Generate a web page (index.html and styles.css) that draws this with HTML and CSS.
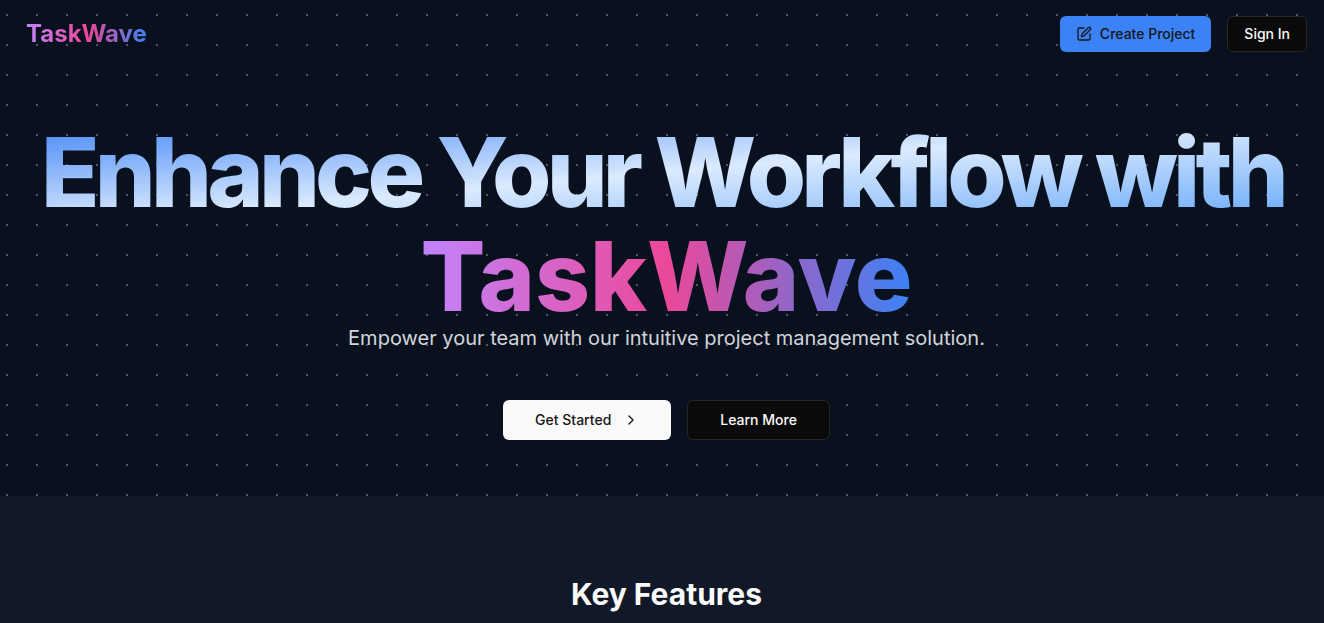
FILE: index.html
```html
<!DOCTYPE html>
<html lang="en">
<head>
<meta charset="utf-8">
<title>TaskWave</title>
<link rel="stylesheet" href="styles.css">
</head>
<body>
<div class="top">
  <header class="nav">
    <a class="logo brand" href="#">TaskWave</a>
    <nav class="nav-actions">
      <button class="btn btn-blue" type="button">
        <svg class="icon" viewBox="0 0 24 24" aria-hidden="true"><path d="M12 3H5a2 2 0 0 0-2 2v14a2 2 0 0 0 2 2h14a2 2 0 0 0 2-2v-7"/><path d="M18.375 2.625a1 1 0 0 1 3 3l-9.013 9.014a2 2 0 0 1-.853.505l-2.873.84a.5.5 0 0 1-.62-.62l.84-2.873a2 2 0 0 1 .506-.852z"/></svg>
        Create Project
      </button>
      <button class="btn btn-dark" type="button">Sign In</button>
    </nav>
  </header>
  <main class="hero">
    <h1 class="headline">
      <span class="headline-lead">Enhance Your Workflow with</span>
      <span class="brand">TaskWave</span>
    </h1>
    <p class="tagline">Empower your team with our intuitive project management solution.</p>
    <div class="hero-actions">
      <button class="btn btn-large btn-light" type="button">
        Get Started
        <svg class="icon" viewBox="0 0 24 24" aria-hidden="true"><path d="m9 18 6-6-6-6"/></svg>
      </button>
      <button class="btn btn-large btn-dark" type="button">Learn More</button>
    </div>
  </main>
</div>
<section class="features">
  <h2 class="features-title">Key Features</h2>
</section>
</body>
</html>
```
FILE: styles.css
```css
* { box-sizing: border-box; margin: 0; }

body {
  background: #111827;
  color: #fafafa;
  font-family: Inter, "Liberation Sans", sans-serif;
}

.top {
  padding: 0 1px 0 10px;
  background-color: #0a111e;
  background-image: conic-gradient(from 90deg at 28px 28px, #4d5862 90deg, transparent 0);
  background-size: 30px 30px;
  background-position: -22px -14px;
}

.nav {
  display: flex;
  justify-content: space-between;
  align-items: center;
  padding: 16px;
}

.brand {
  background: linear-gradient(to right, #c084fc, #ec4899, #3b82f6);
  background-clip: text;
  -webkit-background-clip: text;
  color: transparent;
}

.logo {
  font-size: 24px;
  line-height: 32px;
  font-weight: 700;
  text-decoration: none;
}

.nav-actions { display: flex; gap: 16px; }

.btn {
  display: flex;
  align-items: center;
  justify-content: center;
  gap: 8px;
  height: 36px;
  padding: 0 16px;
  border: 0;
  border-radius: 6px;
  font: 500 14px/20px Inter, "Liberation Sans", sans-serif;
}

.btn-blue { background: #3b82f6; color: #171717; }
.btn-dark { background: #0a0a0a; color: #fafafa; border: 1px solid #262626; }
.btn-light { background: #fafafa; color: #171717; gap: 12px; }
.btn-large { height: 40px; padding: 0 32px; }

.icon {
  width: 16px;
  height: 16px;
  fill: none;
  stroke: currentColor;
  stroke-width: 2;
  stroke-linecap: round;
  stroke-linejoin: round;
}

.hero {
  display: flex;
  flex-direction: column;
  align-items: center;
  padding: 48px 16px 56px;
  text-align: center;
}

.headline {
  display: flex;
  flex-direction: column;
  align-items: center;
  font-size: 96px;
  line-height: 96px;
  font-weight: 800;
}

.headline-lead {
  padding-right: 8px;
  line-height: 112px;
  letter-spacing: -0.05em;
  background: linear-gradient(to bottom right, #3b82f6, #dbeafe, #60a5fa);
  background-clip: text;
  -webkit-background-clip: text;
  color: transparent;
}

.tagline {
  color: #d1d5db;
  font-size: 20px;
  line-height: 28px;
}

.hero-actions {
  display: flex;
  gap: 16px;
  margin-top: 48px;
}

.features {
  padding: 80px 0 0 9px;
  text-align: center;
}

.features-title {
  font-size: 30px;
  line-height: 36px;
  font-weight: 700;
}
```
